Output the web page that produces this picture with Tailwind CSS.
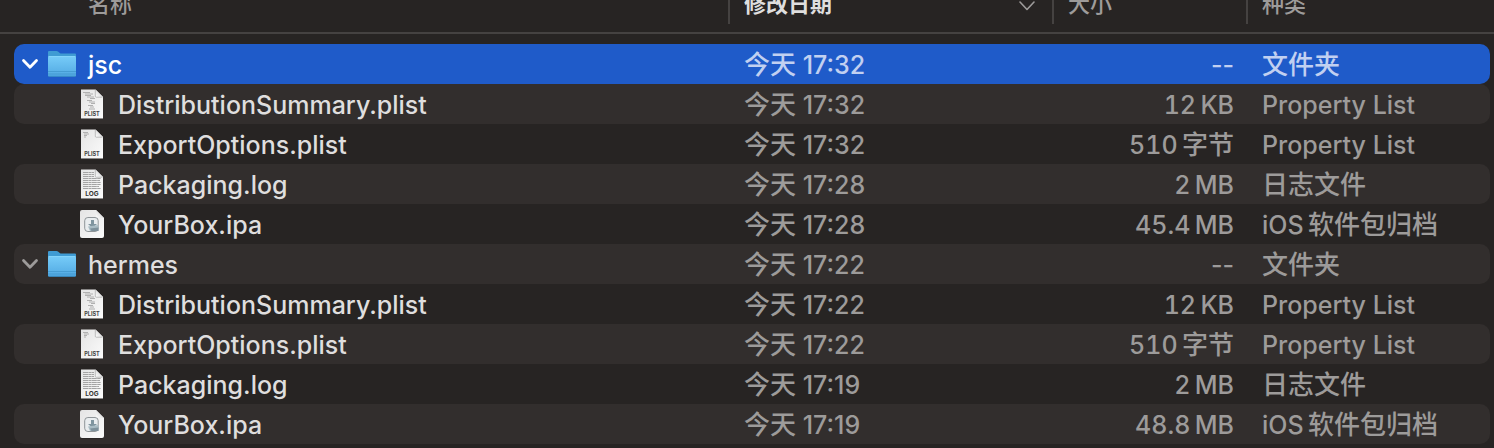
<!DOCTYPE html>
<html lang="zh-CN">
<head>
<meta charset="utf-8">
<title>文件列表</title>
<script src="https://cdn.jsdelivr.net/npm/@tailwindcss/browser@4"></script>
</head>
<body class="h-screen overflow-hidden bg-[#272423] font-['Inter','Noto_Sans_CJK_SC',sans-serif] text-[25px] leading-[42px] font-medium text-[#9d9b9a]">
<svg class="absolute h-0 w-0" aria-hidden="true">
  <defs>
    <linearGradient id="gf" x1="0" y1="0" x2="0" y2="1"><stop offset="0" stop-color="#76cbf8"/><stop offset="1" stop-color="#51a9e2"/></linearGradient>
    <linearGradient id="gp" x1="0" y1="0" x2="1" y2="1"><stop offset="0" stop-color="#e4e4e4"/><stop offset="1" stop-color="#fbfbfb"/></linearGradient>
    <linearGradient id="gc" x1="0" y1="1" x2="1" y2="0"><stop offset="0" stop-color="#ffffff"/><stop offset="1" stop-color="#c4c4c4"/></linearGradient>
  </defs>
  <symbol id="chev" viewBox="0 0 18 12"><path d="M2.500 2.500 9 9.200 15.500 2.500" fill="none" stroke="currentColor" stroke-width="2.800" stroke-linecap="round" stroke-linejoin="round"/></symbol>
  <symbol id="folder" viewBox="0 0 28 28">
    <path d="M0 2Q0 1 1 1H8.500Q9.500 1 10.300 1.700L11.800 3Q12.500 3.600 13.500 3.600H27Q28 3.600 28 4.600V25Q28 26.500 26.500 26.500H1.500Q0 26.500 0 25Z" fill="#3f9bd3"/>
    <path d="M0 7.500Q0 6.500 1 6.500H27Q28 6.500 28 7.500V25Q28 26.500 26.500 26.500H1.500Q0 26.500 0 25Z" fill="url(#gf)"/>
    <path d="M0.500 6.500H27.500" stroke="#8fdcff" stroke-width="0.800"/>
    <path d="M0 21.500H28M0 24H28" stroke="#3e93ca" stroke-width="0.700"/>
    <path d="M0.500 26.300H27.500" stroke="#2f83bb" stroke-width="0.700"/>
  </symbol>
  <symbol id="page" viewBox="0 0 24 30">
    <path d="M1 1H15.500L23 8.500V30H1Z" fill="#111" opacity=".5"/>
    <path d="M1 .5H15.500L23 8V29.500H1Z" fill="url(#gp)"/>
    <path d="M15.500 .5V7Q15.500 8 16.500 8H23Z" fill="url(#gc)"/>
    <path d="M15.300 1V7.200Q15.300 8.200 16.300 8.200H22.500" fill="none" stroke="#9a9a9a" stroke-width=".6"/>
  </symbol>
  <symbol id="plist" viewBox="0 0 24 30">
    <use href="#page"/>
    <text x="12" y="26.700" text-anchor="middle" font-family="Inter" font-size="5.500" font-weight="700" fill="#444">PLIST</text>
  </symbol>
  <symbol id="plistfull" viewBox="0 0 24 30">
    <use href="#plist"/>
    <path d="M3 3.500H10M5 5H13M5 6.500H11M7 8H14M10 9.500H15M7 11.500H12M9 13H15M11 14.500H15M8 16.500H13M10 18H14M9 20H15" stroke="#a9a9a9" stroke-width=".9"/>
  </symbol>
  <symbol id="plistshort" viewBox="0 0 24 30">
    <use href="#plist"/>
    <path d="M3 3.500H8M4 5H9M4 6.500H7M4 8H6" stroke="#a9a9a9" stroke-width=".9"/>
  </symbol>
  <symbol id="log" viewBox="0 0 24 30">
    <use href="#page"/>
    <path d="M3 3.500H14M3 5.500H14M3 7.500H14M3 9.500H21M3 11.500H20M3 13.500H21M3 15.500H21M3 17.500H19M3 19.500H21" stroke="#a4a4a4" stroke-width="1.200" stroke-dasharray="5 .4 3 .4"/>
    <text x="12" y="27.200" text-anchor="middle" font-family="Inter" font-size="6.500" font-weight="700" fill="#333">LOG</text>
  </symbol>
  <symbol id="ipa" viewBox="0 0 24 30">
    <path d="M2 1.500H16L24 9.500V27.500Q24 29.500 22 29.500H2Q0 29.500 0 27.500V3.500Q0 1.500 2 1.500Z" fill="#111" opacity=".5"/>
    <path d="M2 1H16L24 9V27Q24 29 22 29H2Q0 29 0 27V3Q0 1 2 1Z" fill="url(#gp)"/>
    <path d="M16 1V8Q16 9 17 9H24Z" fill="url(#gc)"/>
    <rect x="4.700" y="8.500" width="13.500" height="14" rx="3.200" fill="#e9edef" stroke="#858b8e" stroke-width=".9"/>
    <path d="M11 11H14V15H17L12.500 19 8 15H11Z" fill="#7f959f"/>
    <path d="M8 17.500 18.500 16V22L10 22Z" fill="#a9bcc4"/>
    <path d="M10 19.500 18.500 18.500V22L11.500 22Z" fill="#7e919b"/>
  </symbol>
</svg>
<table class="-mt-5 w-full table-fixed border-separate border-spacing-0 text-left whitespace-nowrap
  [&_tbody_td]:p-0 [&_tbody_td:first-child]:pl-[14px] [&_tbody_td:last-child]:pr-1
  [&_tbody_td>div]:h-10 [&_tbody_td:not(:first-child)>div]:pl-4 [&_tbody_td:nth-child(3)>div]:pr-3
  [&_tbody_td:first-child>div]:rounded-l-[10px] [&_tbody_td:last-child>div]:rounded-r-[10px]
  [&_tbody_tr:nth-child(even)_td>div]:bg-[#322e2d]
  [&_tbody_td:nth-child(3)]:text-right
  [&_tbody_td:first-child>div]:flex [&_tbody_td:first-child>div]:items-center [&_tbody_td:first-child]:text-[#dfdede] [&_tbody_td:first-child_span]:pt-0.5
  [&_i]:text-[26px] [&_i]:not-italic">
  <colgroup><col><col class="w-[324px]"><col class="w-[194px]"><col class="w-[248px]"></colgroup>
  <thead class="text-[22px] leading-[48px] [&_th]:h-[54px] [&_th]:border-b-2 [&_th]:border-[#454241] [&_th]:p-0 [&_th]:align-top [&_th]:font-medium">
    <tr>
      <th scope="col"><div class="h-11 pl-[88px]">名称</div></th>
      <th scope="col" aria-sort="descending"><div class="flex h-11 items-start justify-between border-l-2 border-[#454241] pr-[17px] pl-[14px] font-bold text-[#dfdede]">修改日期
        <svg class="mt-5 h-3 w-4 text-[#9d9b9a]" viewBox="0 0 16 12" aria-hidden="true"><path d="M1 2 8 9.500 15 2" fill="none" stroke="currentColor" stroke-width="1.600" stroke-linecap="round" stroke-linejoin="round"/></svg></div></th>
      <th scope="col"><div class="h-11 border-l-2 border-[#454241] pl-[14px]">大小</div></th>
      <th scope="col"><div class="h-11 border-l-2 border-[#454241] pl-[14px]">种类</div></th>
    </tr>
  </thead>
  <tbody class="before:block before:h-[10px] before:content-['']">
    <tr class="text-[#c1d0f1] [&_td>div]:bg-[#1f5bc9]">
      <td><div class="gap-[9px] pl-[7px] text-white"><button type="button" aria-label="折叠 jsc" aria-expanded="true"><svg class="h-3 w-[18px]"><use href="#chev"/></svg></button><svg class="h-7 w-7"><use href="#folder"/></svg><span class="pl-[3px]">jsc</span></div></td>
      <td><div><i>今天</i> 17:32</div></td><td><div>--</div></td><td><div><i>文件夹</i></div></td>
    </tr>
    <tr>
      <td><div class="gap-[14px] pl-[66px]"><svg class="h-[30px] w-6"><use href="#plistfull"/></svg><span>DistributionSummary.plist</span></div></td>
      <td><div><i>今天</i> 17:32</div></td><td class="tabular-nums"><div>12&#8201;KB</div></td><td><div>Property List</div></td>
    </tr>
    <tr>
      <td><div class="gap-[14px] pl-[66px]"><svg class="h-[30px] w-6"><use href="#plistshort"/></svg><span>ExportOptions.plist</span></div></td>
      <td><div><i>今天</i> 17:32</div></td><td class="tabular-nums"><div>510&#8201;<i>字节</i></div></td><td><div>Property List</div></td>
    </tr>
    <tr>
      <td><div class="gap-[14px] pl-[66px]"><svg class="h-[30px] w-6"><use href="#log"/></svg><span>Packaging.log</span></div></td>
      <td><div><i>今天</i> 17:28</div></td><td class="tabular-nums"><div>2&#8201;MB</div></td><td><div><i>日志文件</i></div></td>
    </tr>
    <tr>
      <td><div class="gap-[14px] pl-[66px]"><svg class="h-[30px] w-6"><use href="#ipa"/></svg><span>YourBox.ipa</span></div></td>
      <td><div><i>今天</i> 17:28</div></td><td class="tabular-nums"><div>45.4&#8201;MB</div></td><td><div>iOS&#8201;<i>软件包归档</i></div></td>
    </tr>
    <tr>
      <td><div class="gap-[9px] pl-[7px]"><button type="button" class="text-[#9d9b9a]" aria-label="折叠 hermes" aria-expanded="true"><svg class="h-3 w-[18px]"><use href="#chev"/></svg></button><svg class="h-7 w-7"><use href="#folder"/></svg><span class="pl-[3px]">hermes</span></div></td>
      <td><div><i>今天</i> 17:22</div></td><td><div>--</div></td><td><div><i>文件夹</i></div></td>
    </tr>
    <tr>
      <td><div class="gap-[14px] pl-[66px]"><svg class="h-[30px] w-6"><use href="#plistfull"/></svg><span>DistributionSummary.plist</span></div></td>
      <td><div><i>今天</i> 17:22</div></td><td class="tabular-nums"><div>12&#8201;KB</div></td><td><div>Property List</div></td>
    </tr>
    <tr>
      <td><div class="gap-[14px] pl-[66px]"><svg class="h-[30px] w-6"><use href="#plistshort"/></svg><span>ExportOptions.plist</span></div></td>
      <td><div><i>今天</i> 17:22</div></td><td class="tabular-nums"><div>510&#8201;<i>字节</i></div></td><td><div>Property List</div></td>
    </tr>
    <tr>
      <td><div class="gap-[14px] pl-[66px]"><svg class="h-[30px] w-6"><use href="#log"/></svg><span>Packaging.log</span></div></td>
      <td><div><i>今天</i> 17:19</div></td><td class="tabular-nums"><div>2&#8201;MB</div></td><td><div><i>日志文件</i></div></td>
    </tr>
    <tr>
      <td><div class="gap-[14px] pl-[66px]"><svg class="h-[30px] w-6"><use href="#ipa"/></svg><span>YourBox.ipa</span></div></td>
      <td><div><i>今天</i> 17:19</div></td><td class="tabular-nums"><div>48.8&#8201;MB</div></td><td><div>iOS&#8201;<i>软件包归档</i></div></td>
    </tr>
  </tbody>
</table>
</body>
</html>
